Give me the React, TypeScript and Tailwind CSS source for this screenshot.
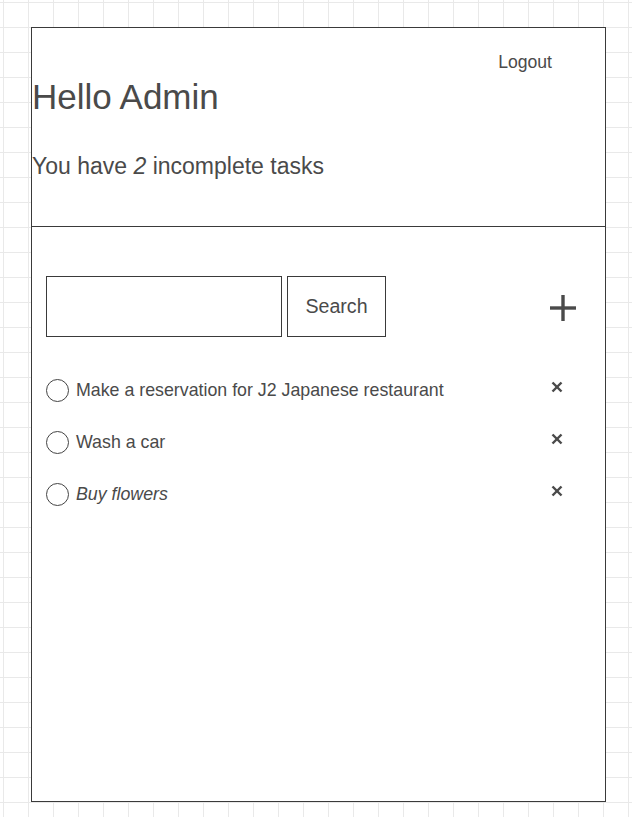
import { useState } from 'react'

type Task = { id: number; title: string; italic?: boolean }

const initialTasks: Task[] = [
  { id: 1, title: 'Make a reservation for J2 Japanese restaurant' },
  { id: 2, title: 'Wash a car' },
  { id: 3, title: 'Buy flowers', italic: true },
]

function PlusIcon() {
  return (
    <svg width="26" height="26" viewBox="0 0 26 26" className="mt-[3px] mr-[29px] shrink-0">
      <line x1="13" y1="0" x2="13" y2="26" stroke="#4a4a4a" strokeWidth="3.4" />
      <line x1="0" y1="13" x2="26" y2="13" stroke="#4a4a4a" strokeWidth="3.4" />
    </svg>
  )
}

function CrossIcon() {
  return (
    <svg width="12" height="12" viewBox="0 0 12 12" className="mb-[6px]">
      <line x1="1.5" y1="1.5" x2="10.5" y2="10.5" stroke="#4a4a4a" strokeWidth="2.4" />
      <line x1="10.5" y1="1.5" x2="1.5" y2="10.5" stroke="#4a4a4a" strokeWidth="2.4" />
    </svg>
  )
}

export default function App() {
  const [tasks, setTasks] = useState(initialTasks)
  const [query, setQuery] = useState('')

  return (
    <div className="min-h-screen bg-white bg-[linear-gradient(to_right,#e9e9e9_1px,transparent_1px),linear-gradient(to_bottom,#e9e9e9_1px,transparent_1px)] [background-size:25px_25px] [background-position:3px_2px] pl-[31px] pt-[27px] pb-[15px] [font-family:Liberation_Sans,Arial,sans-serif] text-[#4a4a4a]">
      <div className="w-[575px] h-[775px] border border-[#3a3a3a] bg-white flex flex-col">
        <header className="border-b border-[#3a3a3a] pb-[47px]">
          <div className="flex justify-end pt-[24px] pr-[53px]">
            <button className="text-[17.6px] leading-[20px] text-[#4a4a4a] cursor-pointer">Logout</button>
          </div>
          <h1 className="mt-[5px] text-[35px] leading-[40px] font-normal">Hello Admin</h1>
          <p className="mt-[36px] text-[23px] leading-[26px]">
            You have <em>{tasks.length - 1}</em> incomplete tasks
          </p>
        </header>

        <section className="pl-[14px] pt-[49px]">
          <div className="flex items-center">
            <input
              value={query}
              onChange={e => setQuery(e.target.value)}
              className="w-[236px] h-[61px] border border-[#3a3a3a] px-3 text-[17.6px] outline-none"
            />
            <button className="ml-[5px] w-[99px] h-[61px] border border-[#3a3a3a] text-[19.6px] text-[#4a4a4a] cursor-pointer">
              Search
            </button>
            <div className="ml-auto flex">
              <PlusIcon />
            </div>
          </div>

          <ul className="mt-[27px]">
            {tasks.map(task => (
              <li key={task.id} className="flex items-center h-[52px] pr-[42px]">
                <span className="w-[23px] h-[23px] rounded-full border border-[#444] shrink-0" />
                <span className={`ml-[7px] text-[17.8px] leading-[20px] ${task.italic ? 'italic' : ''}`}>
                  {task.title}
                </span>
                <button
                  className="ml-auto cursor-pointer flex"
                  onClick={() => setTasks(ts => ts.filter(t => t.id !== task.id))}
                >
                  <CrossIcon />
                </button>
              </li>
            ))}
          </ul>
        </section>
      </div>
    </div>
  )
}
